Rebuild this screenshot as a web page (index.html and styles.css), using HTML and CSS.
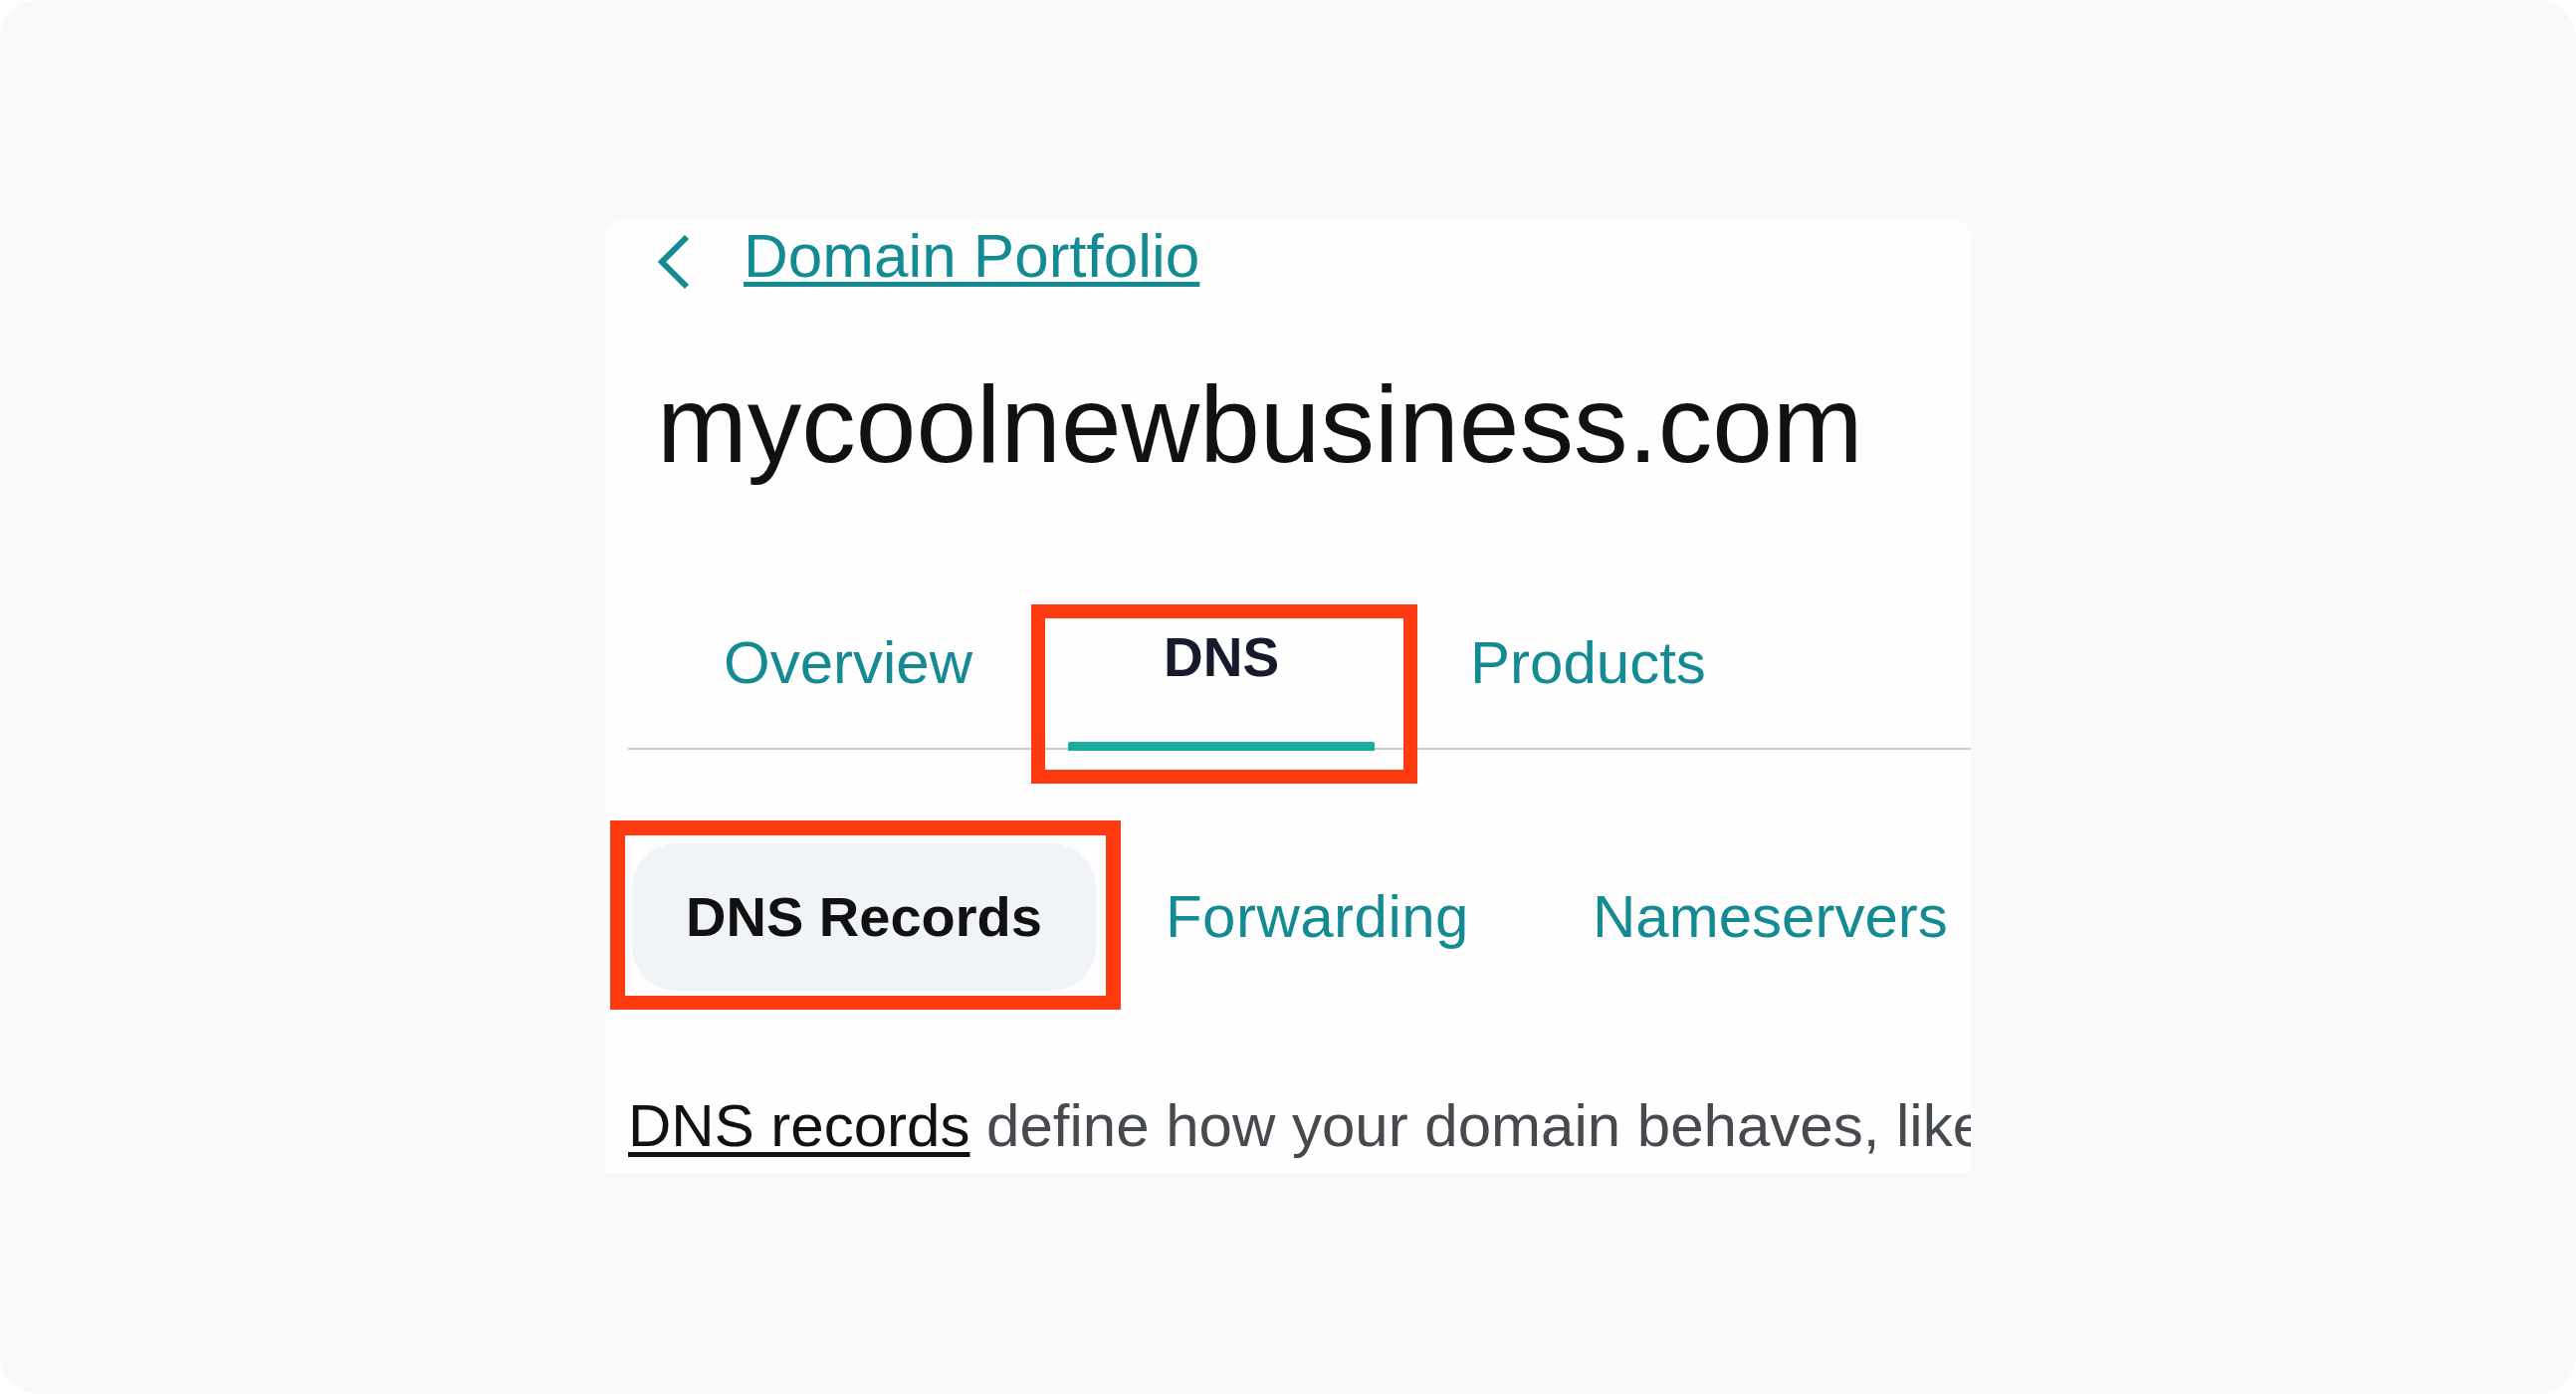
FILE: index.html
```html
<!DOCTYPE html>
<html lang="en">
<head>
<meta charset="utf-8">
<title>mycoolnewbusiness.com – DNS</title>
<link rel="stylesheet" href="styles.css">
</head>
<body>
<div class="page">
  <div class="card">
    <div class="back-row">
      <svg class="chevron" width="34" height="56" viewBox="0 0 34 56" aria-hidden="true">
        <polyline points="30,3 5,28 30,53" fill="none" stroke="#148a93" stroke-width="6" stroke-linejoin="miter"/>
      </svg>
      <a class="back-link" href="#">Domain Portfolio</a>
    </div>
    <h1 class="domain">mycoolnewbusiness.com</h1>
    <nav class="tabs">
      <a class="tab" href="#">Overview</a>
      <a class="tab tab-active" href="#">DNS<span class="highlight highlight-tab"></span></a>
      <a class="tab" href="#">Products</a>
    </nav>
    <div class="subtabs">
      <a class="subtab subtab-active" href="#">DNS Records<span class="highlight highlight-sub"></span></a>
      <a class="subtab subtab-wide" href="#">Forwarding</a>
      <a class="subtab" href="#">Nameservers</a>
    </div>
    <p class="desc"><a class="desc-link" href="#">DNS records</a> define how your domain behaves, like showing your website content and delivering your email.</p>
  </div>
</div>
</body>
</html>
```
FILE: styles.css
```css
* { box-sizing: border-box; }
html, body { margin: 0; padding: 0; background: #ffffff; }
body { font-family: "Liberation Sans", Arial, sans-serif; }

.page {
  width: 2588px;
  height: 1400px;
  background: #f8f9fb;
  border-radius: 38px;
  padding: 220px 0 0 608px;
  overflow: hidden;
}

.card {
  width: 1372px;
  height: 958px;
  background: #fefefe;
  border-radius: 20px 20px 0 0;
  overflow: hidden;
}

.back-row {
  display: flex;
  align-items: flex-start;
  padding-left: 52px;
  height: 73px;
}
.chevron { margin-top: 15px; flex: none; }
.back-link {
  margin-left: 53px;
  font-size: 62px;
  line-height: 73px;
  color: #148a93;
  text-decoration: underline;
  text-decoration-thickness: 5px;
  text-underline-offset: 5px;
}

.domain {
  margin: 73px 0 0 0;
  padding-left: 52px;
  font-size: 109px;
  line-height: 120px;
  font-weight: 400;
  color: #111111;
  white-space: nowrap;
}

.tabs {
  display: flex;
  margin: 80px 0 0 23px;
  border-bottom: 2px solid #c9cbcd;
  align-items: flex-start;
}
.tab {
  position: relative;
  display: block;
  padding: 70px 96px 55px;
  font-size: 60px;
  line-height: 60px;
  color: #148a93;
  text-decoration: none;
  white-space: nowrap;
}
.tab-active {
  color: #161a2c;
  font-weight: 700;
  font-size: 55px;
  padding-top: 64px;
  padding-bottom: 61px;
  width: 308px;
  text-align: center;
  padding-left: 0;
  padding-right: 0;
}
.tab-active::after {
  content: "";
  position: absolute;
  left: 0;
  right: 0;
  bottom: -3px;
  height: 9px;
  background: #1aaba3;
  border-radius: 2px 2px 0 0;
}

.highlight {
  position: absolute;
  border: 14px solid #fd3a10;
  pointer-events: none;
}
.highlight-tab { left: -37px; right: -43px; top: 41px; bottom: -36px; }
.highlight-sub { left: -22px; right: -25px; top: -23px; bottom: -19px; border-width: 15px 15px 14px 15px; }

.subtabs {
  display: flex;
  gap: 16px;
  margin: 94px 0 0 27px;
  white-space: nowrap;
}
.subtab {
  position: relative;
  display: block;
  padding: 44px 54px;
  font-size: 60px;
  line-height: 60px;
  color: #148a93;
  text-decoration: none;
}
.subtab-wide { letter-spacing: 0.5px; }
.subtab-active {
  background: #f0f4f8;
  border-radius: 44px;
  color: #111111;
  font-weight: 700;
  font-size: 56px;
}

.desc {
  margin: 106px 0 0 23px;
  font-size: 60px;
  line-height: 60px;
  color: #464a4e;
  white-space: nowrap;
}
.desc-link {
  color: #111111;
  text-decoration: underline;
  text-decoration-thickness: 5px;
  text-underline-offset: 6px;
}
```
